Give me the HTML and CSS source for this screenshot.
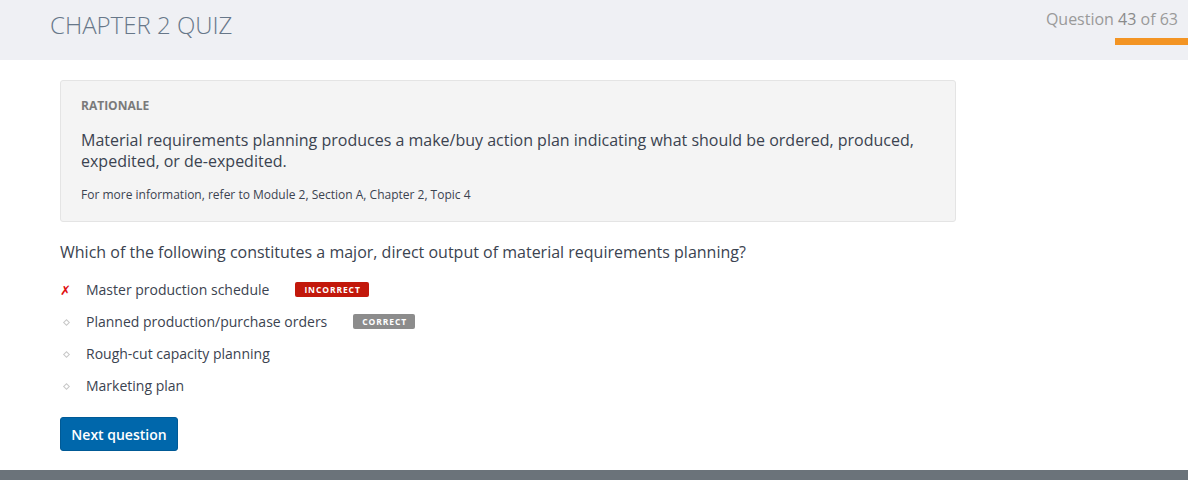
FILE: index.html
```html
<!DOCTYPE html>
<html>
<head>
<meta charset="utf-8">
<link rel="stylesheet" href="styles.css">
</head>
<body>
<header class="top">
  <h1 class="title">CHAPTER 2 QUIZ</h1>
  <div class="progress">
    <div class="count">Question <span class="num">43</span> of 63</div>
    <div class="bar"></div>
  </div>
</header>
<main class="content">
  <section class="rationale">
    <div class="label">RATIONALE</div>
    <p class="explain">Material requirements planning produces a make/buy action plan indicating what should be ordered, produced, expedited, or de-expedited.</p>
    <p class="ref">For more information, refer to Module 2, Section A, Chapter 2, Topic 4</p>
  </section>
  <p class="question">Which of the following constitutes a major, direct output of material requirements planning?</p>
  <ul class="options">
    <li class="opt"><span class="mark x">✗</span><span class="text">Master production schedule</span><span class="badge bad">INCORRECT</span></li>
    <li class="opt"><span class="mark"><span class="dot"></span></span><span class="text">Planned production/purchase orders</span><span class="badge good">CORRECT</span></li>
    <li class="opt"><span class="mark"><span class="dot"></span></span><span class="text">Rough-cut capacity planning</span></li>
    <li class="opt"><span class="mark"><span class="dot"></span></span><span class="text">Marketing plan</span></li>
  </ul>
  <button class="next">Next question</button>
</main>
<footer class="foot"></footer>
</body>
</html>
```

FILE: styles.css
```css
* { box-sizing: border-box; }
html, body { margin: 0; padding: 0; }
body {
  font-family: "Open Sans", "Liberation Sans", sans-serif;
  background: #fff;
  color: #3b4350;
  width: 1188px;
  height: 480px;
  overflow: hidden;
  display: flex;
  flex-direction: column;
}
.top {
  height: 60px;
  background: #eff0f4;
  display: flex;
  justify-content: space-between;
  align-items: flex-start;
  padding-left: 50px;
}
.title {
  margin: 9px 0 0 0;
  font-weight: 300;
  font-size: 24px;
  line-height: 32px;
  color: #677789;
  letter-spacing: 0;
}
.progress {
  display: flex;
  flex-direction: column;
  align-items: flex-end;
}
.count {
  margin-top: 8px;
  margin-right: 10px;
  font-size: 16px;
  line-height: 22px;
  color: #9a9a9a;
}
.count .num { color: #8a8a8a; }
.bar {
  margin-top: 8px;
  width: 73px;
  height: 7px;
  background: #f39423;
}
.content {
  flex: 1;
  padding: 20px 0 0 60px;
}
.rationale {
  width: 896px;
  height: 142px;
  background: #f4f4f4;
  border: 1px solid #e4e4e4;
  border-radius: 3px;
  padding: 17px 20px 0 20px;
}
.label {
  font-size: 12px;
  font-weight: 700;
  color: #7a7a7a;
  line-height: 16px;
}
.explain {
  margin: 16px 0 0 0;
  font-size: 16px;
  line-height: 21px;
  color: #3b4350;
}
.ref {
  margin: 15px 0 0 0;
  font-size: 12px;
  line-height: 16px;
  color: #3b4350;
}
.question {
  margin: 19px 0 0 0;
  font-size: 16px;
  line-height: 22px;
  color: #3b4350;
}
.options {
  list-style: none;
  margin: 11px 0 0 0;
  padding: 0;
}
.opt {
  display: flex;
  align-items: center;
  height: 32px;
  font-size: 14px;
}
.mark {
  width: 26px;
  display: flex;
  align-items: center;
  padding-left: 3px;
}
.mark.x {
  color: #e01010;
  font-size: 13px;
  font-weight: 700;
  font-family: "DejaVu Sans", sans-serif;
  padding-left: 0;
}
.dot {
  width: 5px;
  height: 5px;
  border: 1px solid #c8c8c8;
  transform: rotate(45deg);
  margin-left: 1px;
}
.text { color: #3b4350; line-height: 20px; }
.badge {
  color: #fff;
  font-size: 8.5px;
  font-weight: 700;
  letter-spacing: 0.9px;
  line-height: 15px;
  padding: 0 8px 0 9px;
  border-radius: 2px;
  position: relative;
  top: -1px;
}
.badge.bad { background: #c2180b; margin-left: 26px; }
.badge.good { background: #8c8c8c; margin-left: 26px; }
.next {
  margin-top: 15px;
  width: 118px;
  height: 34px;
  background: #0067ab;
  color: #fff;
  border: 1px solid #005a96;
  border-radius: 3px;
  font-family: "Open Sans", "Liberation Sans", sans-serif;
  font-size: 14px;
  font-weight: 600;
  padding: 0;
}
.foot {
  height: 10px;
  background: #6b737a;
}
```
